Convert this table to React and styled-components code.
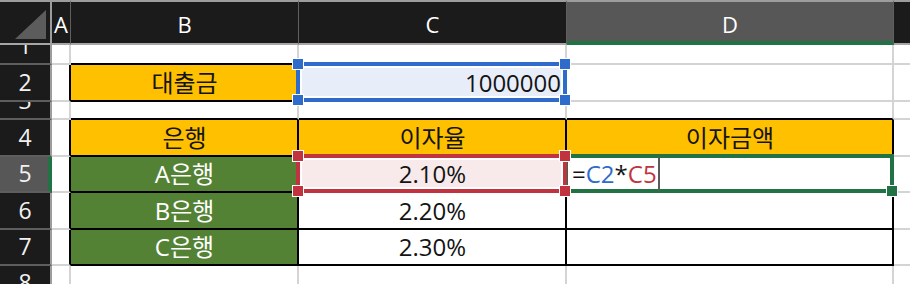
import React from 'react'
import styled, { createGlobalStyle } from 'styled-components'

const ORANGE = '#ffc000';
const GREEN = '#548235';
const BLUE = '#2f6bcb';
const RED = '#c1343f';
const ACTIVE = '#217346';

const GlobalStyle = createGlobalStyle`
  * { box-sizing: border-box; }
  html, body {
    margin: 0;
    background: #fff;
    overflow: hidden;
  }
  body {
    font-family: "Open Sans", "Noto Sans CJK KR", sans-serif;
  }
`;

const columns = [
  { key: 'A', width: 19 },
  { key: 'B', width: 228 },
  { key: 'C', width: 268 },
  { key: 'D', width: 327 },
  { key: 'E', width: 200 },
];

const rows = [
  { n: 1, h: 20 },
  { n: 2, h: 37 },
  { n: 3, h: 18 },
  { n: 4, h: 37 },
  { n: 5, h: 36 },
  { n: 6, h: 37 },
  { n: 7, h: 36 },
  { n: 8, h: 36 },
];

const selectedCol = 'D';
const selectedRow = 5;

// cells that carry the black table border
const boxed = new Set(['B2', 'B4', 'C4', 'D4', 'B5', 'C5', 'D5', 'B6', 'C6', 'D6', 'B7', 'C7', 'D7']);

const cells = {
  B2: { text: '대출금', fill: ORANGE },
  C2: { text: '1000000', align: 'flex-end', fill: '#e7eef9', frame: BLUE },
  B4: { text: '은행', fill: ORANGE },
  C4: { text: '이자율', fill: ORANGE },
  D4: { text: '이자금액', fill: ORANGE },
  B5: { text: 'A은행', fill: GREEN, color: '#fff' },
  C5: { text: '2.10%', fill: '#f8eaeb', frame: RED },
  D5: { editing: true },
  B6: { text: 'B은행', fill: GREEN, color: '#fff' },
  C6: { text: '2.20%' },
  B7: { text: 'C은행', fill: GREEN, color: '#fff' },
  C7: { text: '2.30%' },
};

const Sheet = styled.div`
  display: grid;
  grid-template-columns: 52px ${columns.map(c => c.width + 'px').join(' ')};
  grid-template-rows: 45px ${rows.map(r => r.h + 'px').join(' ')};
  width: max-content;
`;

const Corner = styled.div`
  display: flex;
  justify-content: flex-end;
  align-items: flex-end;
  padding: 0 4px 4px 0;
  background: #1b1b1b;
  border-top: 2px solid #9d9d9d;
  border-right: 2px solid #9d9d9d;
  border-bottom: 2px solid #a6a6a6;
`;

const CornerMark = styled.div`
  width: 31px;
  height: 29px;
  background: #5c5c5c;
  clip-path: polygon(100% 0, 100% 100%, 0 100%);
`;

const ColHead = styled.div`
  display: flex;
  justify-content: center;
  align-items: center;
  padding-top: 2px;
  background: ${p => (p.$selected ? '#575757' : '#1b1b1b')};
  color: #fff;
  font-size: 22px;
  line-height: 1;
  border-top: 2px solid #9d9d9d;
  border-right: 1px solid #5f5f5f;
  border-bottom: 2px solid ${p => (p.$selected ? ACTIVE : '#a6a6a6')};
  box-shadow: ${p => (p.$selected ? `inset 0 -2px 0 ${ACTIVE}` : 'none')};
  white-space: nowrap;
`;

const RowHead = styled.div`
  display: flex;
  justify-content: center;
  align-items: flex-end;
  overflow: hidden;
  background: ${p => (p.$selected ? '#575757' : '#1b1b1b')};
  color: #f2f2f2;
  font-size: 23px;
  line-height: 1;
  border-right: 2px solid ${p => (p.$selected ? ACTIVE : '#9d9d9d')};
  border-bottom: 2px solid #5e5e5e;
  box-shadow: ${p => (p.$selected ? `inset -2px 0 0 ${ACTIVE}` : 'none')};
`;

const RowNum = styled.span`
  flex: none;
  height: 36px;
  display: flex;
  align-items: center;
`;

const Cell = styled.div`
  position: relative;
  display: flex;
  align-items: center;
  justify-content: ${p => p.$align || 'center'};
  padding: 0 4px 0 5px;
  background: ${p => p.$fill || '#fff'};
  color: ${p => p.$color || '#141414'};
  font-size: 24px;
  line-height: 1;
  white-space: nowrap;
  border-right: 2px solid ${p => (p.$edgeRight ? '#000' : '#d4d4d4')};
  border-bottom: 2px solid ${p => (p.$edgeBottom ? '#000' : '#d4d4d4')};
`;

const EditCell = styled(Cell)`
  justify-content: flex-start;
  align-items: stretch;
`;

const EditText = styled.span`
  display: flex;
  align-items: center;
`;

const Ref = styled.span`
  color: ${p => p.$color};
`;

const Caret = styled.span`
  position: relative;
  z-index: 4;
  width: 2px;
  margin-left: 1px;
  background: #5a5a5a;
`;

const Frame = styled.div`
  position: absolute;
  left: -3px;
  top: -3px;
  right: -2px;
  bottom: -2px;
  border: 4px solid ${p => p.$color};
  box-shadow: inset 0 0 0 2px #fff;
  z-index: ${p => p.$z};
  pointer-events: none;
`;

const Handle = styled.span`
  position: absolute;
  width: 12px;
  height: 12px;
  background: ${p => p.$color};
  border: 1px solid #fff;
  ${p => (p.$y === 'top' ? 'top: -8px;' : 'bottom: -8px;')}
  ${p => (p.$x === 'left' ? 'left: -8px;' : 'right: -8px;')}
`;

const RangeFrame = ({ color }) => (
  <Frame $color={color} $z={3}>
    <Handle $color={color} $x="left" $y="top" />
    <Handle $color={color} $x="right" $y="top" />
    <Handle $color={color} $x="left" $y="bottom" />
    <Handle $color={color} $x="right" $y="bottom" />
  </Frame>
);

const ActiveFrame = () => (
  <Frame $color={ACTIVE} $z={2}>
    <Handle $color={ACTIVE} $x="right" $y="bottom" />
  </Frame>
);

const nextCol = key => {
  const i = columns.findIndex(c => c.key === key);
  return columns[i + 1] ? columns[i + 1].key : null;
};

const App = () => {
  return (
    <>
      <GlobalStyle />
      <Sheet>
        <Corner>
          <CornerMark />
        </Corner>
        {columns.map(c => (
          <ColHead key={c.key} $selected={c.key === selectedCol}>{c.key}</ColHead>
        ))}

        {rows.map(r => (
          <React.Fragment key={r.n}>
            <RowHead $selected={r.n === selectedRow}>
              <RowNum>{r.n}</RowNum>
            </RowHead>
            {columns.map(c => {
              const id = c.key + r.n;
              const data = cells[id] || {};
              const right = nextCol(c.key);
              const edgeRight = boxed.has(id) || (right && boxed.has(right + r.n));
              const edgeBottom = boxed.has(id) || boxed.has(c.key + (r.n + 1));

              if (data.editing) {
                return (
                  <EditCell key={id} $edgeRight={edgeRight} $edgeBottom={edgeBottom}>
                    <EditText>
                      =<Ref $color={BLUE}>C2</Ref>*<Ref $color={RED}>C5</Ref>
                    </EditText>
                    <Caret />
                    <ActiveFrame />
                  </EditCell>
                );
              }

              return (
                <Cell
                  key={id}
                  $fill={data.fill}
                  $color={data.color}
                  $align={data.align}
                  $edgeRight={edgeRight}
                  $edgeBottom={edgeBottom}
                >
                  {data.text}
                  {data.frame && <RangeFrame color={data.frame} />}
                </Cell>
              );
            })}
          </React.Fragment>
        ))}
      </Sheet>
    </>
  )
}

export default App
